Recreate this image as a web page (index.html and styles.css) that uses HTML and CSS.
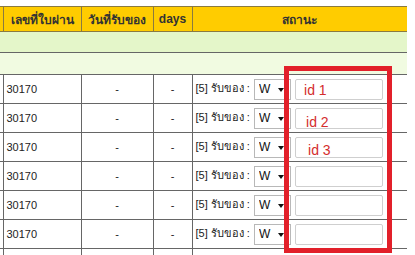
FILE: index.html
```html
<!DOCTYPE html>
<html lang="th">
<head>
  <meta charset="utf-8">
  <title>รับของ</title>
  <link rel="stylesheet" href="styles.css">
</head>
<body>
  <div class="wrap">
    <table class="grid">
      <colgroup>
        <col class="c0"><col class="c1"><col class="c2"><col class="c3"><col class="c4">
      </colgroup>
      <thead>
        <tr>
          <th></th>
          <th>เลขที่ใบผ่าน</th>
          <th>วันที่รับของ</th>
          <th>days</th>
          <th>สถานะ</th>
        </tr>
      </thead>
      <tbody>
        <tr class="band1"><td colspan="5"></td></tr>
        <tr class="band2"><td colspan="5"></td></tr>
        <tr class="row">
          <td></td><td>30170</td><td class="mid">-</td><td class="mid">-</td>
          <td class="status">[5] รับของ :
            <span class="sel"><select><option>W</option></select></span>
            <span class="box"><input type="text"><span class="note n1">id 1</span></span>
          </td>
        </tr>
        <tr class="row">
          <td></td><td>30170</td><td class="mid">-</td><td class="mid">-</td>
          <td class="status">[5] รับของ :
            <span class="sel"><select><option>W</option></select></span>
            <span class="box"><input type="text"><span class="note n2">id 2</span></span>
          </td>
        </tr>
        <tr class="row">
          <td></td><td>30170</td><td class="mid">-</td><td class="mid">-</td>
          <td class="status">[5] รับของ :
            <span class="sel"><select><option>W</option></select></span>
            <span class="box"><input type="text"><span class="note n3">id 3</span></span>
          </td>
        </tr>
        <tr class="row">
          <td></td><td>30170</td><td class="mid">-</td><td class="mid">-</td>
          <td class="status">[5] รับของ :
            <span class="sel"><select><option>W</option></select></span>
            <span class="box"><input type="text"></span>
          </td>
        </tr>
        <tr class="row">
          <td></td><td>30170</td><td class="mid">-</td><td class="mid">-</td>
          <td class="status">[5] รับของ :
            <span class="sel"><select><option>W</option></select></span>
            <span class="box"><input type="text"></span>
          </td>
        </tr>
        <tr class="row">
          <td></td><td>30170</td><td class="mid">-</td><td class="mid">-</td>
          <td class="status">[5] รับของ :
            <span class="sel"><select><option>W</option></select></span>
            <span class="box"><input type="text"></span>
          </td>
        </tr>
        <tr class="row">
          <td></td><td></td><td></td><td></td><td></td>
        </tr>
      </tbody>
    </table>
    <!-- highlight drawn over the input column -->
    <div class="mark"></div>
  </div>
</body>
</html>
```

FILE: styles.css
```css
body {
  margin: 0;
  background: #fff;
  font-family: "Liberation Sans", "DejaVu Sans", sans-serif;
  font-size: 11px;
  color: #222;
  overflow: hidden;
}
.wrap {
  position: relative;
  padding-top: 6px;
}
.grid {
  border-collapse: collapse;
  table-layout: fixed;
  width: 407px;
}
.c0 { width: 3px; }
.c1 { width: 78px; }
.c2 { width: 72px; }
.c3 { width: 39px; }
.c4 { width: 215px; }
.grid th {
  background-color: #ffcc00;
  border: 1px solid #8a7a40;
  border-right: none;
  height: 24px;
  padding: 0;
  font-size: 12px;
  font-weight: bold;
  color: #333;
  text-align: center;
}
.grid th + th {
  border-left: 1px solid #8a7a40;
}
.grid th:first-child {
  border-left: none;
}
.band1 td {
  background-color: #e4f6c9;
  height: 20px;
  padding: 0;
  border-bottom: 1px solid #666;
}
.band2 td {
  background-color: #f1fbe1;
  height: 21px;
  padding: 0;
  border-bottom: 1px solid #666;
}
.row td {
  height: 28px;
  padding: 0 0 0 3px;
  border-bottom: 1px solid #666;
  border-left: 1px solid #666;
  white-space: nowrap;
  color: #222;
}
.row td:first-child {
  border-left: none;
  padding: 0;
}
.row td.mid {
  text-align: center;
  padding: 0;
}
.row td.status {
  padding-left: 3px;
}
.sel {
  position: relative;
  display: inline-block;
  vertical-align: middle;
  margin-left: 1px;
}
.sel select {
  -webkit-appearance: none;
  appearance: none;
  width: 37px;
  height: 21px;
  border: 1px solid #b8b8b8;
  border-radius: 0;
  background: #fff;
  font-family: "Liberation Sans", sans-serif;
  font-size: 12px;
  color: #111;
  padding: 0 0 0 4px;
}
.sel::after {
  content: "";
  position: absolute;
  right: 7px;
  top: 9px;
  border-left: 3px solid transparent;
  border-right: 3px solid transparent;
  border-top: 4px solid #111;
}
.box {
  position: relative;
  display: inline-block;
  vertical-align: middle;
  margin-left: 1px;
}
.box input {
  width: 88px;
  height: 21px;
  box-sizing: border-box;
  border: 1px solid #cfcfcf;
  border-radius: 2px;
  padding: 0;
}
.note {
  position: absolute;
  font-family: "Liberation Sans", sans-serif;
  font-size: 14px;
  color: #d42d2d;
  line-height: 14px;
}
.n1 { left: 9px; top: 4px; }
.n2 { left: 11px; top: 7px; }
.n3 { left: 13px; top: 6px; }
.mark {
  position: absolute;
  left: 284px;
  top: 66px;
  width: 98px;
  height: 177px;
  border: 5px solid #e2202a;
}
```
